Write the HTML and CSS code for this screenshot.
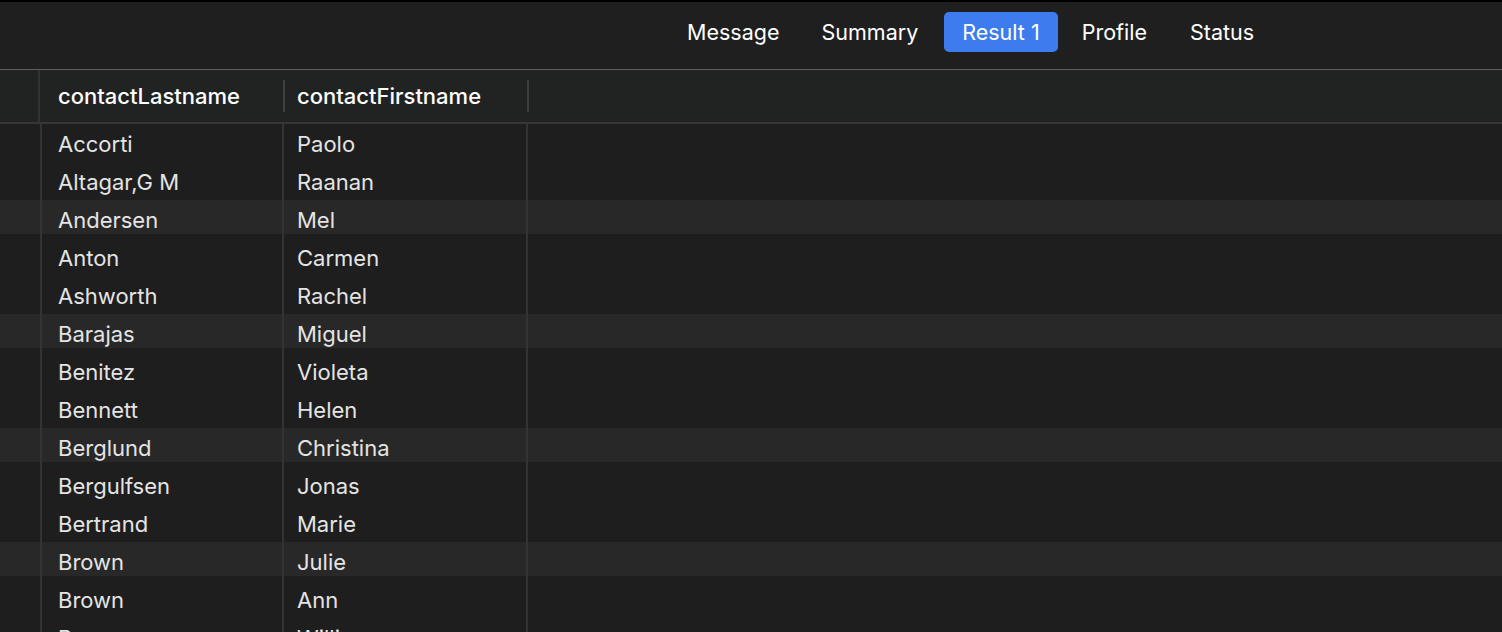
FILE: index.html
```html
<!DOCTYPE html>
<html>
<head>
<meta charset="utf-8">
<link rel="stylesheet" href="styles.css">
</head>
<body>
<div class="app">
  <div class="topline"></div>
  <div class="toolbar">
    <div class="tabs">
      <div class="tab">Message</div>
      <div class="tab">Summary</div>
      <div class="tab active">Result 1</div>
      <div class="tab">Profile</div>
      <div class="tab">Status</div>
    </div>
  </div>
  <div class="header">
    <div class="hcell gutter"></div>
    <div class="hcell col">contactLastname</div>
    <div class="hcell col">contactFirstname</div>
    <div class="hcell rest"></div>
  </div>
  <div class="body">
    <div class="row"><div class="cell gutter"></div><div class="cell c1">Accorti</div><div class="cell c2">Paolo</div><div class="cell rest"></div></div>
    <div class="row"><div class="cell gutter"></div><div class="cell c1">Altagar,G M</div><div class="cell c2">Raanan</div><div class="cell rest"></div></div>
    <div class="row stripe"><div class="cell gutter"></div><div class="cell c1">Andersen</div><div class="cell c2">Mel</div><div class="cell rest"></div></div>
    <div class="row"><div class="cell gutter"></div><div class="cell c1">Anton</div><div class="cell c2">Carmen</div><div class="cell rest"></div></div>
    <div class="row"><div class="cell gutter"></div><div class="cell c1">Ashworth</div><div class="cell c2">Rachel</div><div class="cell rest"></div></div>
    <div class="row stripe"><div class="cell gutter"></div><div class="cell c1">Barajas</div><div class="cell c2">Miguel</div><div class="cell rest"></div></div>
    <div class="row"><div class="cell gutter"></div><div class="cell c1">Benitez</div><div class="cell c2">Violeta</div><div class="cell rest"></div></div>
    <div class="row"><div class="cell gutter"></div><div class="cell c1">Bennett</div><div class="cell c2">Helen</div><div class="cell rest"></div></div>
    <div class="row stripe"><div class="cell gutter"></div><div class="cell c1">Berglund</div><div class="cell c2">Christina</div><div class="cell rest"></div></div>
    <div class="row"><div class="cell gutter"></div><div class="cell c1">Bergulfsen</div><div class="cell c2">Jonas</div><div class="cell rest"></div></div>
    <div class="row"><div class="cell gutter"></div><div class="cell c1">Bertrand</div><div class="cell c2">Marie</div><div class="cell rest"></div></div>
    <div class="row stripe"><div class="cell gutter"></div><div class="cell c1">Brown</div><div class="cell c2">Julie</div><div class="cell rest"></div></div>
    <div class="row"><div class="cell gutter"></div><div class="cell c1">Brown</div><div class="cell c2">Ann</div><div class="cell rest"></div></div>
    <div class="row"><div class="cell gutter"></div><div class="cell c1">Brown</div><div class="cell c2">William</div><div class="cell rest"></div></div>
  </div>
</div>
</body>
</html>
```

FILE: styles.css
```css
* { box-sizing: border-box; }
html, body {
  margin: 0;
  padding: 0;
  background: #1e1e1e;
  height: 632px;
  overflow: hidden;
}
.app {
  font-family: Inter, "Liberation Sans", sans-serif;
  font-size: 22px;
  color: #e4e4e4;
}
.topline {
  height: 2px;
  background: #000;
}
.toolbar {
  height: 68px;
  background: #1f1f1f;
  border-bottom: 1px solid #5e5e5e;
  padding-top: 10px;
}
.tabs {
  display: flex;
  gap: 8px;
  padding-left: 670px;
  font-size: 21.5px;
}
.tab {
  height: 40px;
  line-height: 40px;
  padding: 0 17px;
  color: #fff;
  border-radius: 5px;
}
.tab.active {
  background: #3d7cee;
  padding: 0 18px;
  margin-left: 1px;
}
.tab.active + .tab {
  margin-left: -1px;
}
.tab.active + .tab + .tab {
  margin-left: 1px;
}
.header {
  display: grid;
  grid-template-columns: 40px 243px 244px 1fr;
  height: 54px;
  background: #212322;
  border-bottom: 2px solid #363636;
}
.hcell {
  position: relative;
  line-height: 52px;
  color: #fff;
  font-weight: 500;
}
.hcell.gutter {
  border-right: 2px solid #333;
}
.hcell.col {
  padding-left: 18px;
}
.hcell.col + .hcell.col {
  padding-left: 14px;
}
.hcell.col::after {
  content: "";
  position: absolute;
  right: -2px;
  top: 10px;
  width: 2px;
  height: 32px;
  background: #3e3e3e;
}
.body {
  display: flex;
  flex-direction: column;
}
.row {
  display: grid;
  grid-template-columns: 42px 242px 244px 1fr;
  height: 38px;
}
.row.stripe {
  background: linear-gradient(#282828 0 34px, transparent 34px);
}
.cell {
  line-height: 41px;
  white-space: nowrap;
  overflow: hidden;
}
.cell.gutter,
.cell.c1,
.cell.c2 {
  border-right: 2px solid #333;
}
.cell.c1 { padding-left: 16px; }
.cell.c2 { padding-left: 13px; }
```
